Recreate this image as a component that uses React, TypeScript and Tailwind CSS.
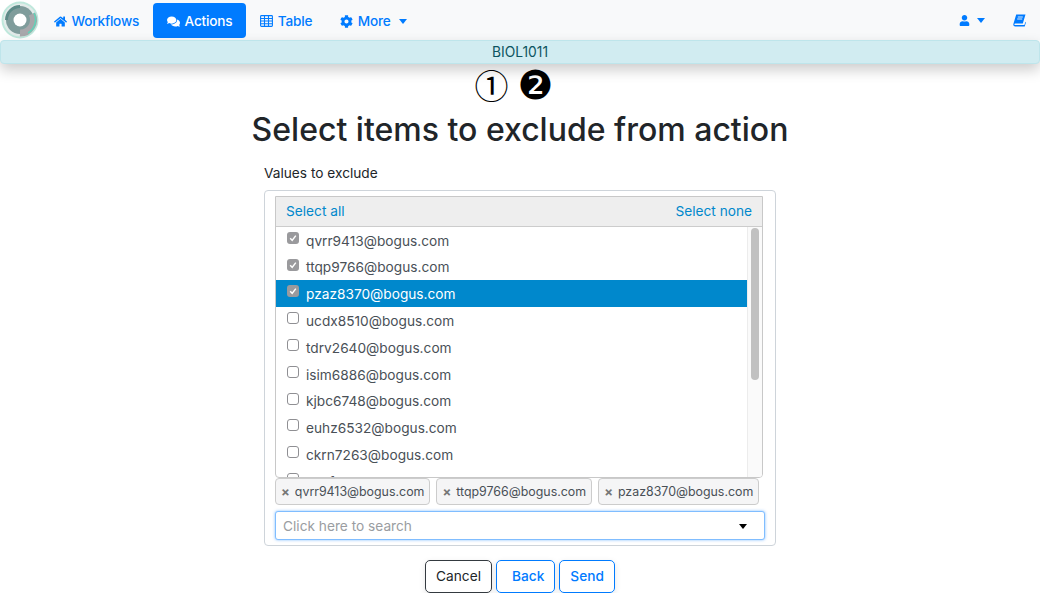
import { FaHome, FaComments, FaCog, FaUser } from 'react-icons/fa';

const ROWS = [
  { email: 'qvrr9413@bogus.com', checked: true },
  { email: 'ttqp9766@bogus.com', checked: true },
  { email: 'pzaz8370@bogus.com', checked: true, active: true },
  { email: 'ucdx8510@bogus.com' },
  { email: 'tdrv2640@bogus.com' },
  { email: 'isim6886@bogus.com' },
  { email: 'kjbc6748@bogus.com' },
  { email: 'euhz6532@bogus.com' },
  { email: 'ckrn7263@bogus.com' },
  { email: 'mwfo1157@bogus.com' },
];

const TAGS = ['qvrr9413@bogus.com', 'ttqp9766@bogus.com', 'pzaz8370@bogus.com'];

function Caret({ className }: { className: string }) {
  return <span className={`inline-block border-x-[4.5px] border-t-[5px] border-x-transparent ${className}`} />;
}

function Logo() {
  return (
    <svg width="40" height="40" viewBox="0 0 40 40" aria-hidden="true">
      <rect width="40" height="40" fill="#fff" />
      <circle cx="20" cy="20" r="18.500" fill="#bfe8dc" />
      <circle cx="20" cy="20" r="16.500" fill="#e2ebe9" />
      <circle cx="20" cy="20" r="14" fill="#7f9c9b" />
      <path d="M20 33a13 13 0 0 0 12-19" fill="none" stroke="#a8a8ab" strokeWidth="7" />
      <path d="M6.500 20a13.500 13.500 0 0 1 13.500-13.500" fill="none" stroke="#5d8b88" strokeWidth="3" />
      <path d="M34 13a15.500 15.500 0 0 1-6 20" fill="none" stroke="#62d3b8" strokeWidth="1.500" />
      <circle cx="20" cy="20" r="6.500" fill="#fff" />
    </svg>
  );
}

function TableIcon() {
  return (
    <svg width="13" height="12" viewBox="0 0 13 12" aria-hidden="true" fill="none" stroke="currentColor" strokeWidth="1.100">
      <rect x="0.600" y="0.600" width="11.800" height="10.800" rx="0.800" />
      <path d="M0.600 3.500h11.800M0.600 6h11.800M0.600 8.700h11.800M4.500 0.600v10.800M8.500 0.600v10.800" />
    </svg>
  );
}

function BookIcon() {
  return (
    <svg width="13" height="13" viewBox="0 0 13 13" aria-hidden="true">
      <path d="M3.200 0.500h9.300l-2.700 9H2.300c-.8 0-1.100.5-.9 1 .2.400.6.600 1.100.600h8.900l1-3.400.5.800-1.200 4H2.300C1 12.500.2 11.600.3 10.300z" fill="currentColor" />
      <path d="M4.800 3h5M4.200 5h5" stroke="#f8f9fa" strokeWidth="0.900" />
    </svg>
  );
}

function NavLink({ icon, label, active, caret }: { icon: React.ReactNode; label: string; active?: boolean; caret?: boolean }) {
  return (
    <a className={`flex h-[35px] items-center gap-[4.5px] rounded px-[14px] pt-px text-[13.600px] font-medium tracking-[-0.2px] ${active ? 'bg-[#007bff] text-white' : 'text-[#007bff]'}`}>
      {icon}
      <span>{label}</span>
      {caret && <Caret className="ml-[3.500px] border-t-[#007bff]" />}
    </a>
  );
}

function Checkbox({ checked }: { checked?: boolean }) {
  return checked ? (
    <span className="flex h-3 w-3 items-center justify-center rounded-[3px] bg-[#9a9a9d]">
      <svg width="10" height="10" viewBox="0 0 10 10" aria-hidden="true">
        <path d="M2.200 5.200 4.200 7.400 7.800 2.600" fill="none" stroke="#fff" strokeWidth="1.500" />
      </svg>
    </span>
  ) : (
    <span className="block h-3 w-3 rounded-[3px] border border-[#8f8f93] bg-white" />
  );
}

export default function App() {
  return (
    <div className="flex h-[593px] w-[1040px] flex-col overflow-hidden bg-white font-['Inter',sans-serif] text-[#212529]">
      {/* Navbar */}
      <nav className="flex h-10 items-center bg-[#f8f9fa] pr-[14px]">
        <Logo />
        <div className="flex items-center pt-px">
          <NavLink icon={<FaHome className="text-[13px]" />} label="Workflows" />
          <NavLink icon={<FaComments className="text-[13px]" />} label="Actions" active />
          <NavLink icon={<TableIcon />} label="Table" />
          <NavLink icon={<FaCog className="text-[13px]" />} label="More" caret />
        </div>
        <div className="ml-auto flex items-center gap-[28px] text-[#007bff]">
          <span className="flex items-center gap-[7px]">
            <FaUser className="text-[11px]" />
            <Caret className="border-t-[#007bff]" />
          </span>
          <BookIcon />
        </div>
      </nav>

      {/* Course banner */}
      <div className="flex h-6 items-center justify-center rounded border border-[#bee5eb] bg-[#d1ecf1] text-[13.800px] text-[#0c5460] shadow-[0_6px_14px_rgba(0,0,0,0.2)]">
        BIOL1011
      </div>

      <main className="flex flex-col items-center">
        <div className="flex h-[41px] items-center justify-center gap-[9px] pr-[12px] leading-none text-black">
          <span className="font-['Noto_Sans_CJK_JP',sans-serif] text-[34px]">①</span>
          <span className="font-['DejaVu_Sans',sans-serif] text-[40px]">❷</span>
        </div>
        <h1 className="mt-[3px] text-[32px] leading-[44px] font-medium">Select items to exclude from action</h1>

        <div className="mt-[10px] w-[512px]">
          <label className="block h-[28px] text-[13.700px] leading-[22px] text-[#212529]">Values to exclude</label>

          <div className="flex h-[356px] flex-col rounded border border-[#ced4da] pt-[5px] pr-[12px] pl-[10px]">
            {/* Multi-select list */}
            <div className="h-[282px] shrink-0 overflow-hidden rounded-b border border-[#c8c8c8]">
              <div className="flex h-[29.500px] items-center justify-between border-b border-[#cccccc] bg-[#eeeeee] px-[10px] text-[13.700px] text-[#0088cc]">
                <a>Select all</a>
                <a>Select none</a>
              </div>
              <div className="flex">
                <ul className="min-w-0 flex-1">
                  {ROWS.map((row) => (
                    <li
                      key={row.email}
                      className={`flex h-[26.800px] items-center gap-[7px] pt-[2px] pl-[11px] text-[13.700px] ${row.active ? 'bg-[#0088cc] text-white' : 'text-[#495057]'}`}
                    >
                      <span className="-mt-[6px] block shrink-0">
                        <Checkbox checked={row.checked} />
                      </span>
                      {row.email}
                    </li>
                  ))}
                </ul>
                <div className="h-[260px] w-[15px] shrink-0 border-l border-[#ececec] bg-[#fafafa] pt-[1px] pl-[3px]">
                  <div className="h-[152px] w-2 rounded bg-[#c1c1c1]" />
                </div>
              </div>
            </div>

            {/* Selected tags */}
            <div className="flex h-[27px] shrink-0 gap-[6px]">
              {TAGS.map((tag) => (
                <span key={tag} className="flex h-[27px] items-center gap-[5px] rounded border border-[#cccccc] bg-[#f5f5f6] px-[5px] pt-px text-[12.400px] text-[#495057]">
                  <span className="text-[13px] leading-none font-bold text-[#777777]">×</span>
                  {tag}
                </span>
              ))}
            </div>

            {/* Search */}
            <div className="mt-[6px] -mr-[2px] flex h-[29px] shrink-0 items-center justify-between rounded-[3px] border border-[#80bdff] bg-white pt-[2px] pr-[17px] pl-[7px] text-[13.700px] text-[#9a9da1] shadow-[0_0_3px_rgba(0,123,255,0.5)]">
              <span>Click here to search</span>
              <Caret className="border-t-black" />
            </div>
          </div>

          <div className="mt-[14px] flex justify-center gap-1 text-[13.700px]">
            <button className="h-[33px] rounded-[5px] border border-[#343a40] px-[10px] text-[#212529] shadow-[0_2px_6px_rgba(0,0,0,0.1)]">Cancel</button>
            <button className="h-[33px] rounded-[5px] border border-[#007bff] pr-[10px] pl-[15px] font-medium text-[#007bff] shadow-[0_2px_6px_rgba(0,0,0,0.1)]">Back</button>
            <button className="h-[33px] rounded-[5px] border border-[#007bff] px-[10px] font-medium text-[#007bff] shadow-[0_2px_6px_rgba(0,0,0,0.1)]">Send</button>
          </div>
        </div>
      </main>
    </div>
  );
}
